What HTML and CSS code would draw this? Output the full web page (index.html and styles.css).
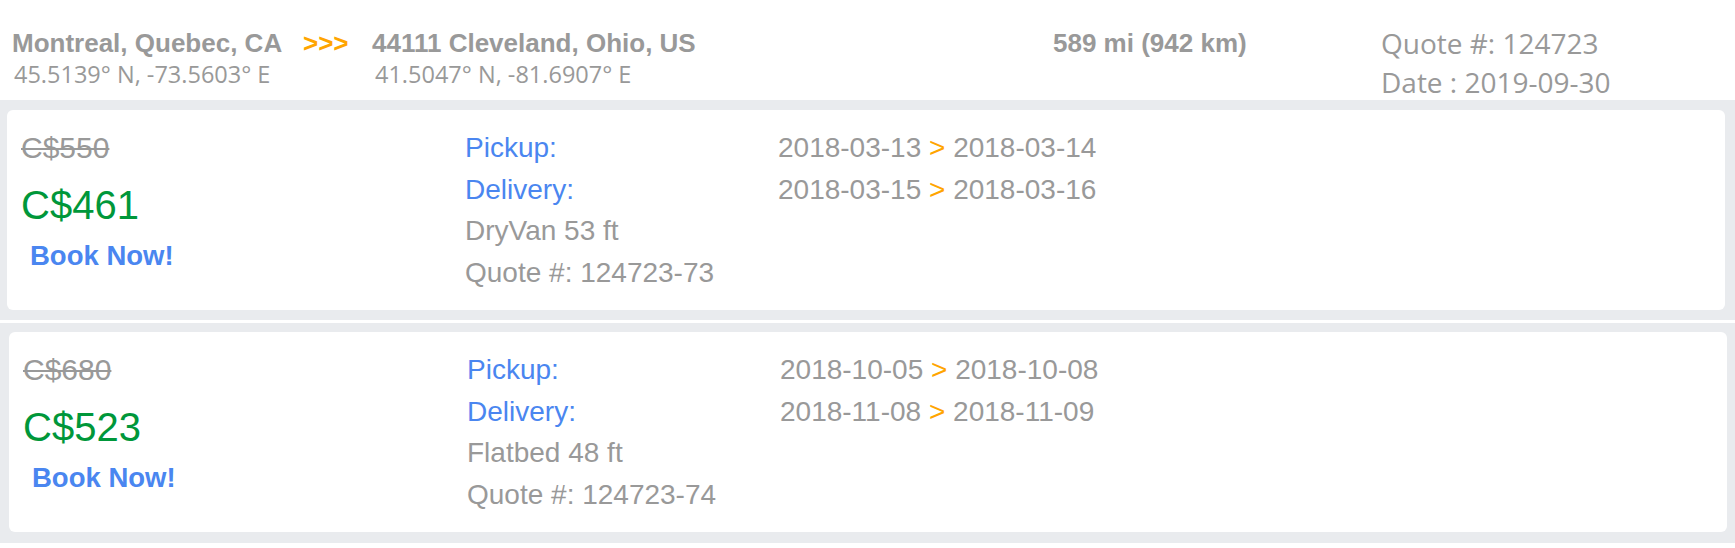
FILE: index.html
```html
<!DOCTYPE html>
<html lang="en">
<head>
<meta charset="utf-8">
<title>Quote 124723</title>
<link rel="stylesheet" href="styles.css">
</head>
<body>
<header class="route">
  <div class="place">
    <div class="city">Montreal, Quebec, CA</div>
    <div class="coords">45.5139° N, -73.5603° E</div>
  </div>
  <div class="arrow">&gt;&gt;&gt;</div>
  <div class="place place-dest">
    <div class="city">44111 Cleveland, Ohio, US</div>
    <div class="coords">41.5047° N, -81.6907° E</div>
  </div>
  <div class="distance">589 mi (942 km)</div>
  <div class="meta">
    <div class="meta-line">Quote #: 124723</div>
    <div class="meta-line">Date : 2019-09-30</div>
  </div>
</header>

<section class="offer">
  <div class="card">
    <div class="prices">
      <div class="price-old">C$550</div>
      <div class="price-new">C$461</div>
      <a class="book" href="#">Book Now!</a>
    </div>
    <div class="details">
      <div class="label">Pickup:</div>
      <div class="label">Delivery:</div>
      <div class="info">DryVan 53 ft</div>
      <div class="info">Quote #: 124723-73</div>
    </div>
    <div class="dates">
      <div class="info">2018-03-13 <span class="sep">&gt;</span> 2018-03-14</div>
      <div class="info">2018-03-15 <span class="sep">&gt;</span> 2018-03-16</div>
    </div>
  </div>
</section>

<section class="offer offer-alt">
  <div class="card">
    <div class="prices">
      <div class="price-old">C$680</div>
      <div class="price-new">C$523</div>
      <a class="book" href="#">Book Now!</a>
    </div>
    <div class="details">
      <div class="label">Pickup:</div>
      <div class="label">Delivery:</div>
      <div class="info">Flatbed 48 ft</div>
      <div class="info">Quote #: 124723-74</div>
    </div>
    <div class="dates">
      <div class="info">2018-10-05 <span class="sep">&gt;</span> 2018-10-08</div>
      <div class="info">2018-11-08 <span class="sep">&gt;</span> 2018-11-09</div>
    </div>
  </div>
</section>
</body>
</html>
```

FILE: styles.css
```css
* {
  box-sizing: border-box;
}

html, body {
  margin: 0;
  padding: 0;
  background: #ffffff;
}

body {
  font-family: "Liberation Sans", Arial, sans-serif;
  color: #999999;
}

/* ---------- header ---------- */
.route {
  height: 100px;
  padding: 24px 0 0 12px;
  display: grid;
  grid-template-columns: 291px 69px 681px 328px 1fr;
  align-items: start;
  background: #ffffff;
}

.city,
.arrow,
.distance {
  font-family: "Liberation Sans", Arial, sans-serif;
  font-weight: bold;
  font-size: 26px;
  line-height: 38px;
  white-space: nowrap;
}

.arrow {
  color: #ffa500;
}

.coords {
  font-family: "Open Sans", "Noto Sans", sans-serif;
  font-size: 23.5px;
  line-height: 24px;
  margin-left: 2px;
  white-space: nowrap;
}

.place-dest .coords {
  margin-left: 3px;
}

.meta-line {
  font-family: "Open Sans", "Noto Sans", sans-serif;
  font-size: 28px;
  line-height: 39px;
  white-space: nowrap;
}

/* ---------- offers ---------- */
.offer {
  background: #e9ebee;
  padding: 10px 10px 10px 7px;
}

.offer + .offer {
  margin-top: 3px;
}

.offer-alt {
  padding: 9px 8px 11px 9px;
}

.card {
  background: #ffffff;
  border-radius: 6px;
  padding: 17px 0 17px 14px;
  display: grid;
  grid-template-columns: 444px 313px 1fr;
  font-size: 28px;
  line-height: 41.5px;
}

.price-old {
  font-size: 30px;
  line-height: 42px;
  color: #999999;
  text-decoration: line-through;
  text-decoration-thickness: 2px;
}

.price-new {
  font-size: 40px;
  line-height: 48px;
  margin-top: 12px;
  color: #00973a;
}

.book {
  display: block;
  margin-top: 11px;
  padding-left: 9px;
  font-size: 27.5px;
  line-height: 32px;
  font-weight: bold;
  color: #4a86f0;
  text-decoration: none;
}

.label {
  color: #4a86f0;
}

.info {
  color: #999999;
  white-space: nowrap;
}

.sep {
  color: #ffa500;
}
```
